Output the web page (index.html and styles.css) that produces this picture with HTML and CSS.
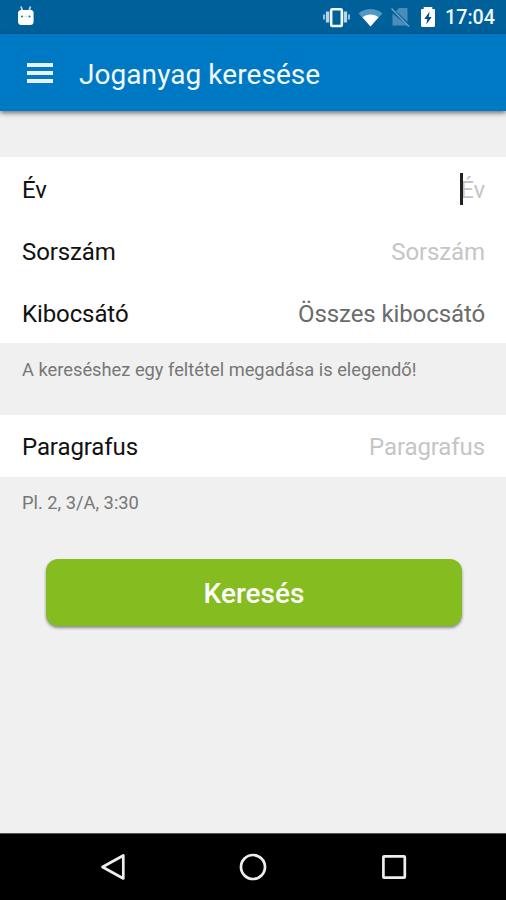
FILE: index.html
```
<!DOCTYPE html>
<html lang="hu">
<head>
<meta charset="utf-8">
<title>Joganyag keresése</title>
<link rel="stylesheet" href="styles.css">
</head>
<body>
<div class="screen">
  <div class="status">
    <svg class="droid" width="18" height="22" viewBox="0 0 18 22">
      <path d="M4 1.500 5.500 6M13.500 1.500 12 6" stroke="#c5dcec" stroke-width="1.700" fill="none"/>
      <path d="M3 5h12l1.600 2v9.500a3.500 3.500 0 0 1-3.500 3.500H4.500A3.500 3.500 0 0 1 1 16.500V7z" fill="#fff"/>
      <circle cx="5" cy="11.500" r="1.100" fill="#2478ad"/><circle cx="12.500" cy="11.500" r="1.100" fill="#2478ad"/>
      <path d="M7.500 11.500h2.500" stroke="#c5d8e8" stroke-width=".7"/>
    </svg>
    <svg class="tray" width="116" height="24" viewBox="0 0 116 24">
      <path d="M1 9.500v5M26 9.500v5" stroke="#a9cbe1" stroke-width="1.800"/>
      <path d="M4.600 6.500v11M22.400 6.500v11" stroke="#b8d4e6" stroke-width="3.400"/>
      <rect x="8.200" y="4.200" width="10.600" height="16.800" rx="1" fill="none" stroke="#f5faff" stroke-width="2.500"/>
      <path d="M35.500 8.500C42 2.500 53 2.500 59.500 8.500L47.500 21.500z" fill="#5398c4"/>
      <path d="M39.500 12.200c4.500-3.600 11.500-3.600 16 0l-8 9.300z" fill="#fff"/>
      <path d="M69.500 8.500 84.500 20.500H69.500zM73 6l3-3h8.500v14z" fill="#4b8db9"/>
      <path d="M68.500 3.500 86 21.500" stroke="#6aa4ca" stroke-width="1.500"/>
      <path d="M104 2h-3.300v2H99q-1 0-1 1v15.500q0 1.500 1.500 1.500h11q1.500 0 1.500-1.500V5q0-1-1-1h-1.700V2z" fill="#fff"/>
      <path d="m106.600 6.500-5.300 7.500h3l-1 5.500 5.400-7.500h-3z" fill="#004f83"/>
    </svg>
    <span class="clock">17:04</span>
  </div>
  <header class="appbar">
    <div class="menu"><i></i><i></i><i></i></div>
    <h1>Joganyag keresése</h1>
  </header>
  <main>
    <section class="group">
      <div class="row"><span class="label">Év</span><span class="value hint focused">Év</span></div>
      <div class="row"><span class="label">Sorszám</span><span class="value hint">Sorszám</span></div>
      <div class="row"><span class="label">Kibocsátó</span><span class="value">Összes kibocsátó</span></div>
    </section>
    <p class="note first">A kereséshez egy feltétel megadása is elegendő!</p>
    <section class="group">
      <div class="row single"><span class="label">Paragrafus</span><span class="value hint">Paragrafus</span></div>
    </section>
    <p class="note second">Pl. 2, 3/A, 3:30</p>
    <button class="search">Keresés</button>
  </main>
  <nav class="navbar">
    <svg width="28" height="32" viewBox="0 0 28 32"><path d="M24.300 4.500v23L3.500 16z" fill="none" stroke="#eee" stroke-width="2.700" stroke-linejoin="round"/></svg>
    <svg width="28" height="32" viewBox="0 0 28 32"><circle cx="14" cy="16" r="12" fill="none" stroke="#eee" stroke-width="2.700"/></svg>
    <svg width="28" height="32" viewBox="0 0 28 32"><rect x="3.400" y="5.300" width="21.400" height="21.400" rx=".8" fill="none" stroke="#eee" stroke-width="2.700"/></svg>
  </nav>
</div>
</body>
</html>
```
FILE: styles.css
```
* { box-sizing: border-box; }
body { margin: 0; font-family: Roboto, "Liberation Sans", sans-serif; }
.screen { width: 506px; height: 900px; display: flex; flex-direction: column; background: #f0f0f0; overflow: hidden; }
.status { height: 34px; flex: none; background: #00609a; display: flex; align-items: center; padding: 0 11px 0 17px; }
.droid { margin-top: -2px; }
.tray { margin-left: auto; margin-right: 6px; }
.clock { color: #f2f8fd; font-size: 19.700px; font-weight: 500; line-height: 34px; padding-top: 1px; }
.appbar { height: 77px; flex: none; background: #0079c5; display: flex; align-items: center; padding: 3px 27px 0; box-shadow: 0 2px 5px rgba(0,0,0,.55); }
.menu { width: 26px; display: grid; gap: 4px; margin-top: -2px; }
.menu i { height: 4px; background: #e6f1fc; }
h1 { margin: 1px 0 0 26px; font-size: 28px; letter-spacing: .06px; font-weight: 400; color: #f2f8ff; line-height: 36px; white-space: nowrap; }
main { flex: 1; padding-top: 46px; display: flex; flex-direction: column; }
.group { background: #fff; }
.row { height: 62px; display: flex; align-items: center; justify-content: space-between; padding: 3px 21px 0 22px; font-size: 24px; letter-spacing: -.1px; }
.single { padding-top: 2px; }
.label { color: #111; }
.value { color: #6b6b6b; }
.hint { color: #c5c5c7; }
.focused { position: relative; }
.focused::before { content: ""; position: absolute; left: 0; top: -3px; width: 2.500px; height: 32px; background: #222; }
.note { margin: 0; padding: 14px 22px 0; font-size: 18.300px; line-height: 26px; color: #777; }
.first { height: 72px; }
.second { height: 82px; padding-top: 13px; }
.search { width: 416px; height: 67px; margin-left: 46px; border: 0; border-radius: 12px; background: #85bc20; color: #fff; font: 500 28px Roboto, "Liberation Sans", sans-serif; padding: 2px 0 0; box-shadow: 0 2px 3px rgba(0,0,0,.42); }
.navbar { height: 67px; flex: none; background: #000; display: flex; justify-content: center; align-items: center; gap: 112.500px; border-top: 1px solid #555; }
```
